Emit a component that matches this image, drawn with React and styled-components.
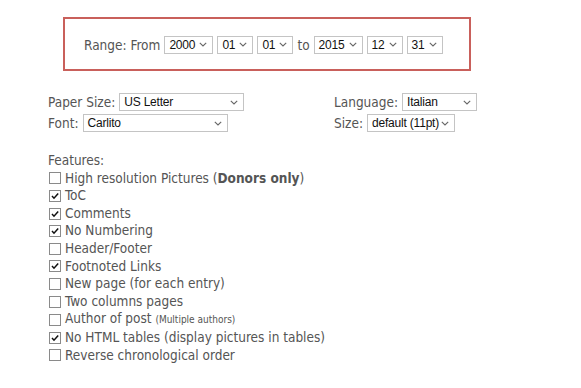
import React from "react";
import styled, { createGlobalStyle } from "styled-components";

const Global = createGlobalStyle`
  html, body { margin: 0; padding: 0; background: #fff; }
  body { font-family: "DejaVu Sans Condensed", "DejaVu Sans", sans-serif; color: #555; }
`;

const Page = styled.div`
  width: 581px;
  height: 388px;
  padding: 17px 0 0 48px;
  box-sizing: border-box;
`;

const RangeBox = styled.div`
  margin-left: 15px;
  width: 408px;
  height: 54px;
  box-sizing: border-box;
  border: 2px solid #c9605b;
  display: flex;
  align-items: center;
  padding: 1px 0 0 19px;
  gap: 4px;
`;

const Label = styled.span`
  font-size: 13.5px;
  color: #555;
  white-space: nowrap;
`;

const SelectBox = styled.span`
  display: inline-flex;
  align-items: center;
  justify-content: space-between;
  gap: 1px;
  box-sizing: border-box;
  width: ${(p) => p.$w}px;
  height: 18px;
  border: 1px solid #c4c4c4;
  padding: 0 5px 0 4px;
  font-family: "Liberation Sans", Arial, sans-serif;
  font-size: 12px;
  letter-spacing: -0.2px;
  color: #111;
  background: #fff;
  white-space: nowrap;
`;

const SelectText = styled.span`
  flex: 1;
  min-width: 0;
`;

const Chevron = () => (
  <svg width="8" height="5" viewBox="0 0 8 5" style={{ flex: "none" }}>
    <path d="M0.8 0.8 L4 4 L7.2 0.8" fill="none" stroke="#666" strokeWidth="1.1" />
  </svg>
);

const Select = ({ w, children }) => (
  <SelectBox $w={w}>
    <SelectText>{children}</SelectText>
    <Chevron />
  </SelectBox>
);

const Options = styled.div`
  display: grid;
  grid-template-columns: 286px auto;
  row-gap: 3px;
  margin-top: 22px;
`;

const Field = styled.div`
  display: flex;
  align-items: center;
  gap: 4px;
  height: 18px;
`;

const Features = styled.div`
  margin-top: 20px;
  display: flex;
  flex-direction: column;
  font-size: 13.5px;
  line-height: 17.6px;
`;

const Row = styled.label`
  display: flex;
  align-items: center;
  gap: 4px;
  padding-left: 1px;
`;

const Box = styled.span`
  width: 12px;
  height: 12px;
  box-sizing: border-box;
  border: 1px solid #8a8a8a;
  background: #fff;
  display: inline-flex;
  align-items: center;
  justify-content: center;
`;

const Small = styled.span`
  font-size: 10px;
`;

const Bold = styled.b`
  font-weight: bold;
`;

const Check = ({ on }) => (
  <Box>
    {on && (
      <svg width="10" height="10" viewBox="0 0 10 10">
        <path d="M2 5 L4 7.2 L8.2 2.4" fill="none" stroke="#111" strokeWidth="1.5" />
      </svg>
    )}
  </Box>
);

const items = [
  [false, <>High resolution Pictures (<Bold>Donors only</Bold>)</>],
  [true, "ToC"],
  [true, "Comments"],
  [true, "No Numbering"],
  [false, "Header/Footer"],
  [true, "Footnoted Links"],
  [false, "New page (for each entry)"],
  [false, "Two columns pages"],
  [false, <>Author of post <Small>(Multiple authors)</Small></>],
  [true, "No HTML tables (display pictures in tables)"],
  [false, "Reverse chronological order"],
];

export default function App() {
  return (
    <>
      <Global />
      <Page>
        <RangeBox>
          <Label>Range: From</Label>
          <Select w={49}>2000</Select>
          <Select w={36}>01</Select>
          <Select w={36}>01</Select>
          <Label>to</Label>
          <Select w={49}>2015</Select>
          <Select w={36}>12</Select>
          <Select w={36}>31</Select>
        </RangeBox>
        <Options>
          <Field>
            <Label>Paper Size:</Label>
            <Select w={125}>US Letter</Select>
          </Field>
          <Field>
            <Label>Language:</Label>
            <Select w={75}>Italian</Select>
          </Field>
          <Field>
            <Label>Font:</Label>
            <Select w={145}>Carlito</Select>
          </Field>
          <Field>
            <Label>Size:</Label>
            <Select w={88}>default (11pt)</Select>
          </Field>
        </Options>
        <Features>
          <span>Features:</span>
          {items.map(([on, text], i) => (
            <Row key={i}>
              <Check on={on} />
              <span>{text}</span>
            </Row>
          ))}
        </Features>
      </Page>
    </>
  );
}
